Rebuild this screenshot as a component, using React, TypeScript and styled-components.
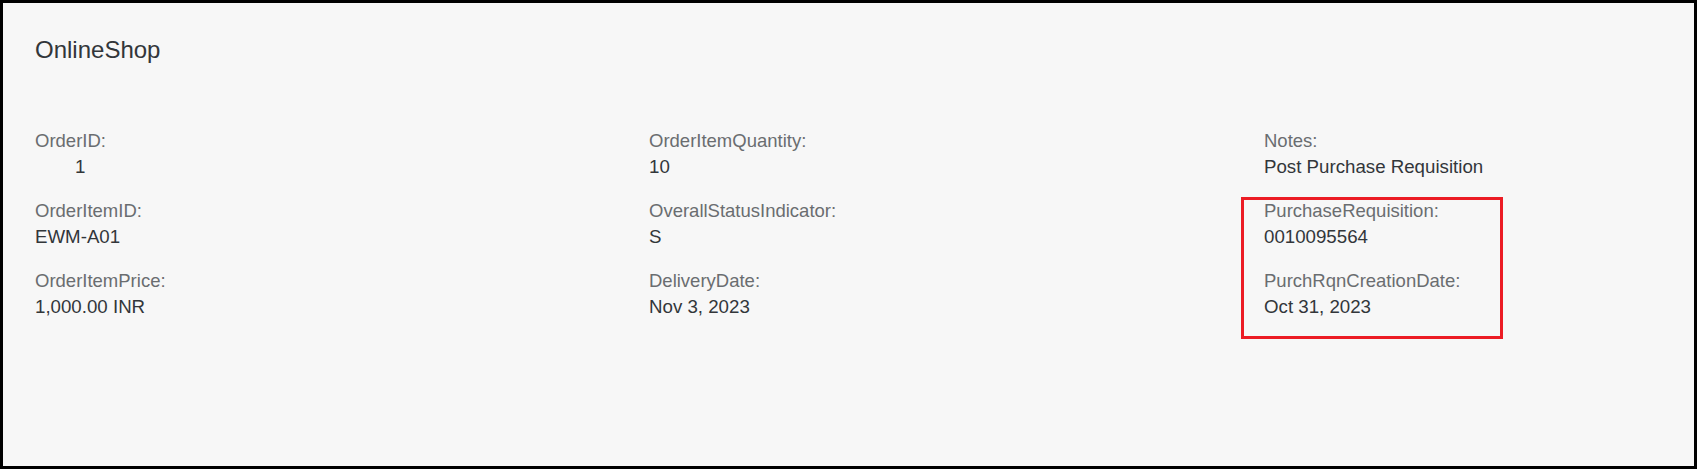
import React from "react";
import styled, { createGlobalStyle } from "styled-components";

const GlobalStyle = createGlobalStyle`
  html, body {
    margin: 0;
    padding: 0;
    background: #ffffff;
  }
  * { box-sizing: border-box; }
`;

const Frame = styled.div`
  width: 1697px;
  height: 469px;
  border: 3px solid #000000;
  background: #f7f7f7;
  padding: 32px 32px 0 32px;
  font-family: "Liberation Sans", Arial, sans-serif;
  color: #32363a;
  overflow: hidden;
`;

const Title = styled.h1`
  margin: 0;
  font-family: "Liberation Sans", Arial, sans-serif;
  font-weight: 400;
  font-size: 24px;
  line-height: 30px;
  color: #32363a;
`;

const Form = styled.div`
  display: grid;
  grid-template-columns: 614px 615px 1fr;
  margin-top: 63px;
`;

const Column = styled.div`
  display: flex;
  flex-direction: column;
  gap: 18px;
`;

const Field = styled.div`
  display: flex;
  flex-direction: column;
`;

const Label = styled.div`
  font-size: 18.5px;
  line-height: 26px;
  color: #6a6d70;
`;

const Value = styled.div<{ $indent?: number }>`
  font-size: 18.7px;
  line-height: 26px;
  color: #32363a;
  padding-left: ${(p) => p.$indent ?? 0}px;
`;

const Highlight = styled.div`
  position: relative;
  display: flex;
  flex-direction: column;
  gap: 18px;

  &::before {
    content: "";
    position: absolute;
    left: -23px;
    top: -1px;
    width: 256px;
    height: 136px;
    border: 3px solid #ec1c24;
    pointer-events: none;
  }
`;

type FieldData = { label: string; value: string; indent?: number };

const col1: FieldData[] = [
  { label: "OrderID:", value: "1", indent: 40 },
  { label: "OrderItemID:", value: "EWM-A01" },
  { label: "OrderItemPrice:", value: "1,000.00 INR" },
];

const col2: FieldData[] = [
  { label: "OrderItemQuantity:", value: "10" },
  { label: "OverallStatusIndicator:", value: "S" },
  { label: "DeliveryDate:", value: "Nov 3, 2023" },
];

const highlighted: FieldData[] = [
  { label: "PurchaseRequisition:", value: "0010095564" },
  { label: "PurchRqnCreationDate:", value: "Oct 31, 2023" },
];

const FieldItem = ({ label, value, indent }: FieldData) => (
  <Field>
    <Label>{label}</Label>
    <Value $indent={indent}>{value}</Value>
  </Field>
);

export default function App() {
  return (
    <>
      <GlobalStyle />
      <Frame>
        <Title>OnlineShop</Title>
        <Form>
          <Column>
            {col1.map((f) => (
              <FieldItem key={f.label} {...f} />
            ))}
          </Column>
          <Column>
            {col2.map((f) => (
              <FieldItem key={f.label} {...f} />
            ))}
          </Column>
          <Column>
            <FieldItem label="Notes:" value="Post Purchase Requisition" />
            <Highlight>
              {highlighted.map((f) => (
                <FieldItem key={f.label} {...f} />
              ))}
            </Highlight>
          </Column>
        </Form>
      </Frame>
    </>
  );
}
